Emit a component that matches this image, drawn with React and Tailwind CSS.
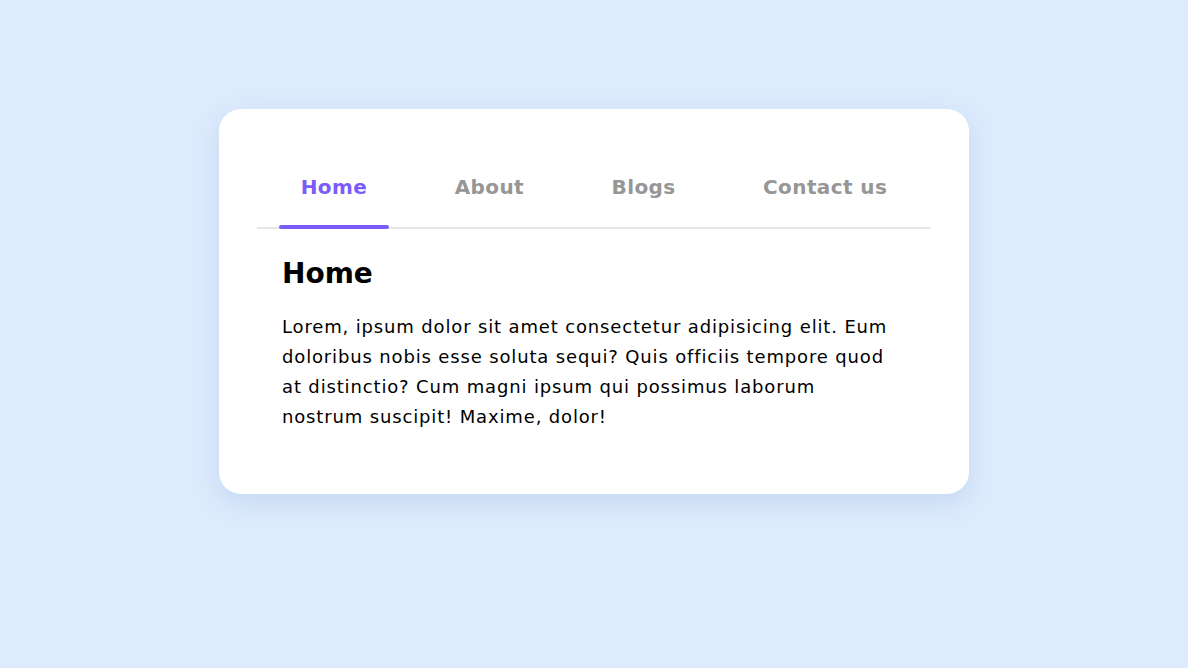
import React, { useState } from 'react';

const tabs = [
  { id: 'home', label: 'Home' },
  { id: 'about', label: 'About' },
  { id: 'blogs', label: 'Blogs' },
  { id: 'contact', label: 'Contact us' },
];

const content = {
  home: 'Home',
  about: 'About',
  blogs: 'Blogs',
  contact: 'Contact us',
};

const App = () => {
  const [active, setActive] = useState('home');

  return (
    <div className="min-h-screen w-full bg-[#ddebfc] flex items-start justify-center pt-[109px] font-['DejaVu_Sans',sans-serif]">
      <div className="w-[750px] bg-white rounded-[22px] px-[38px] pt-[38px] pb-[37px] shadow-[0_8px_24px_rgba(110,150,210,0.22)]">
        {/* Tabs */}
        <div className="flex justify-around border-b-2 border-[#e6e6e6]">
          {tabs.map((tab) => {
            const isActive = active === tab.id;
            return (
              <button
                key={tab.id}
                onClick={() => setActive(tab.id)}
                className={`relative px-[22px] py-[26px] text-[20px] leading-[28px] font-semibold tracking-[0.4px] ${
                  isActive ? 'text-[#7b5cfa]' : 'text-[#969696]'
                }`}
              >
                {tab.label}
                {isActive && (
                  <span className="absolute left-0 right-0 -bottom-[2px] h-[4px] rounded-full bg-[#7b5cfa]" />
                )}
              </button>
            );
          })}
        </div>

        {/* Panel */}
        <div className="px-[25px] pt-[24px] pb-[25px]">
          <h2 className="text-[28px] leading-[42px] font-bold text-black">{content[active]}</h2>
          <p className="mt-[17px] w-[612px] text-[18px] leading-[30px] tracking-[0.85px] text-black">
            Lorem, ipsum dolor sit amet consectetur adipisicing elit. Eum doloribus nobis esse soluta sequi? Quis officiis tempore quod at distinctio? Cum magni ipsum qui possimus laborum nostrum suscipit! Maxime, dolor!
          </p>
        </div>
      </div>
    </div>
  );
};

export default App;
